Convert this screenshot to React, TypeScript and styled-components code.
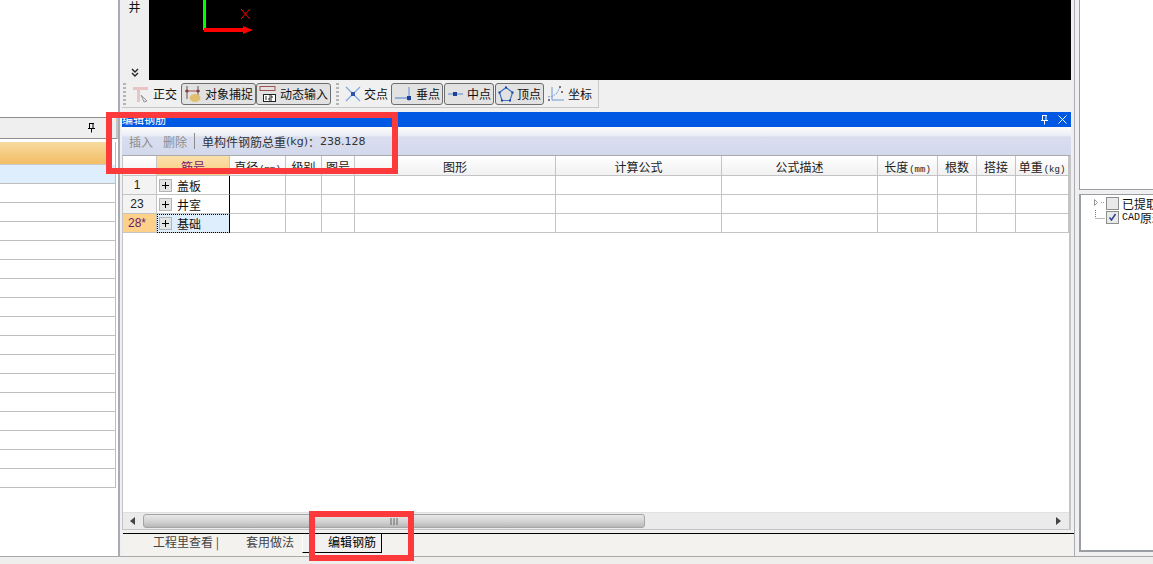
import React from 'react';
import styled, { createGlobalStyle } from 'styled-components';

const GlobalStyle = createGlobalStyle`
  html, body { margin: 0; padding: 0; overflow: hidden; background: #f0f0f0; }
  body { font-family: 'Noto Sans CJK SC', 'Liberation Sans', sans-serif; font-size: 12px; color: #111; }
`;

const Page = styled.div`
  position: relative;
  width: 1153px;
  height: 564px;
  overflow: hidden;
  display: flex;
  flex-direction: column;
`;
const Main = styled.div`
  display: flex;
  height: 556px;
  border-bottom: 1px solid #a9a9a9;
  box-sizing: content-box;
`;
const StatusBar = styled.div`
  flex: 1;
  background: #f0eeec;
`;

/* left list */
const LeftPanel = styled.div`
  width: 118px;
  flex: none;
  background: #fff;
  padding-top: 117px;
  box-sizing: border-box;
`;
const LeftHead = styled.div`
  height: 20px;
  background: #efefef;
  border-top: 1px solid #8e8e8e;
  border-bottom: 1px solid #8e8e8e;
  border-right: 2px solid #c4c4c4;
  display: flex;
  align-items: center;
  justify-content: flex-end;
  padding-right: 20px;
`;
const LeftList = styled.div`
  margin-top: 3px;
  width: 116px;
  border-right: 1px solid #bdbdbd;
  box-sizing: border-box;
`;
const LeftHeadRow = styled.div`
  height: 23px;
  margin-right: 3px;
  background: linear-gradient(#f8dba0, #f2bd64);
  border-bottom: 1px solid #c9c9c9;
  box-sizing: border-box;
`;
const LeftRow = styled.div<{ $active?: boolean }>`
  height: 19px;
  background: ${(p) => (p.$active ? '#deeefc' : '#fff')};
  border-bottom: 1px solid #bfbfbf;
  box-sizing: border-box;
`;

/* centre */
const Center = styled.div`
  width: 957px;
  flex: none;
  box-sizing: border-box;
  border-left: 2px solid #a9adb3;
  display: flex;
  flex-direction: column;
  background: #f0f0f0;
`;
const ViewRow = styled.div`
  display: flex;
  height: 80px;
  flex: none;
`;
const SideStrip = styled.div`
  width: 29px;
  flex: none;
  background: #efefef;
  display: flex;
  flex-direction: column;
  justify-content: space-between;
  align-items: center;
  padding-bottom: 3px;
  box-sizing: border-box;
  line-height: 14px;
  font-size: 12px;
`;
const Canvas = styled.div`
  width: 922px;
  flex: none;
  background: #000;
`;
const SnapBar = styled.div`
  display: flex;
  align-items: center;
  width: 477px;
  height: 28px;
  flex: none;
  margin-left: 2px;
  padding-left: 1px;
  box-sizing: border-box;
  border-right: 1px solid #c8c8c8;
  border-bottom: 1px solid #c8c8c8;
`;
const Grip = styled.span`
  width: 3px;
  height: 22px;
  margin-right: 3px;
  flex: none;
  background: repeating-linear-gradient(#b4b4b4 0 2px, transparent 2px 4px);
`;
const SnapSep = styled(Grip)`
  margin: 0 2px 0 5px;
`;
const SnapButton = styled.div<{ $on?: boolean; $tight?: boolean }>`
  display: flex;
  align-items: center;
  gap: 3px;
  height: 22px;
  margin-left: ${(p) => (p.$tight ? 0 : 1)}px;
  padding: 0 2px 0 2px;
  font-size: 12px;
  white-space: nowrap;
  box-sizing: border-box;
  border-radius: 3px;
  border: 1px solid ${(p) => (p.$on ? '#6d6d6d' : 'transparent')};
  background: ${(p) => (p.$on ? '#e2e2e2' : 'transparent')};
`;

const Dock = styled.div`
  margin-top: 4px;
  margin-left: 2px;
  width: 949px;
  flex: 1;
  display: flex;
  flex-direction: column;
  min-height: 0;
`;
const TitleBar = styled.div`
  height: 15px;
  flex: none;
  background: #0159e3;
  color: #fff;
  font-size: 11px;
  line-height: 15px;
  padding: 0 4px 0 0;
  display: flex;
  justify-content: space-between;
  align-items: center;
`;
const TitleIcons = styled.div`
  display: flex;
  gap: 9px;
  align-items: center;
`;
const EditBar = styled.div`
  height: 28px;
  flex: none;
  display: flex;
  align-items: center;
  padding-left: 7px;
  background: linear-gradient(#fdfdfd 0, #f3f4f8 5px, #e8ebf4 9px, #d9deef 10px, #d3d9ec 100%);
  color: #333;
`;
const EditAction = styled.span`
  color: #8d8d8d;
  margin-right: 10px;
`;
const EditDivider = styled.span`
  width: 1px;
  height: 16px;
  background: #8a8a8a;
  margin: 0 7px 0 -3px;
`;
const Latin = styled.span`
  font-family: 'DejaVu Sans', sans-serif;
  font-size: 11px;
`;
const GridWrap = styled.div`
  height: 375px;
  flex: none;
  background: #fff;
  border-top: 1px solid #a9a9a9;
  border-left: 1px solid #c4c4c4;
  border-right: 2px solid #c4c4c4;
  display: flex;
  flex-direction: column;
  box-sizing: border-box;
  border-bottom: 1px solid #c4c4c4;
`;
const Grid = styled.div`
  flex: 1;
`;
const COLUMNS = '34px 73px 56px 36px 33px 201px 166px 156px 60px 39px 39px 53px';
const GridHead = styled.div`
  display: grid;
  grid-template-columns: ${COLUMNS};
  height: 20px;
`;
const HeadCell = styled.div<{ $active?: boolean }>`
  border-right: 1px solid #c4c4c4;
  border-bottom: 1px solid #c4c4c4;
  background: ${(p) => (p.$active ? 'linear-gradient(#fbe0aa, #f7cd84)' : 'linear-gradient(#fff, #f1f1f1)')};
  color: ${(p) => (p.$active ? '#7a1a6a' : '#222')};
  text-align: center;
  line-height: 22px;
  box-sizing: border-box;
  white-space: nowrap;
  overflow: hidden;
`;
const Unit = styled.span`
  font-family: 'Liberation Mono', monospace;
  font-size: 9px;
  margin-left: 1px;
`;
const DataRow = styled.div`
  display: grid;
  grid-template-columns: ${COLUMNS};
  height: 19px;
`;
const Cell = styled.div`
  border-right: 1px solid #c4c4c4;
  border-bottom: 1px solid #c4c4c4;
  box-sizing: border-box;
`;
const RowHead = styled(Cell)<{ $active?: boolean }>`
  background: ${(p) => (p.$active ? '#fdd18a' : '#f3f3f3')};
  color: ${(p) => (p.$active ? '#6d1a6a' : '#222')};
  text-align: center;
  padding-right: 5px;
  line-height: 18px;
  font-size: 12px;
  font-family: 'Liberation Sans', sans-serif;
`;
const NameCell = styled(Cell)<{ $active?: boolean }>`
  display: flex;
  align-items: center;
  gap: 5px;
  padding-left: 2px;
  border-right: 1px solid #000;
  background: ${(p) => (p.$active ? '#deeefc' : '#fff')};
  outline: ${(p) => (p.$active ? '1px dotted #000' : 'none')};
  outline-offset: -1px;
`;
const Expander = styled.span`
  width: 11px;
  height: 11px;
  flex: none;
  border: 1px solid #b4b4b4;
  background: #e4e4e4;
  position: relative;
  &::before {
    content: '';
    position: absolute;
    left: 2px;
    top: 5px;
    width: 7px;
    height: 1px;
    background: #000;
  }
  &::after {
    content: '';
    position: absolute;
    left: 5px;
    top: 2px;
    width: 1px;
    height: 7px;
    background: #000;
  }
`;
const ScrollBar = styled.div`
  height: 16px;
  flex: none;
  display: flex;
  align-items: center;
  background: #ebebeb;
  border-top: 1px solid #e0e0e0;
  padding: 0 8px 0 7px;
  gap: 8px;
`;
const ScrollThumb = styled.div`
  width: 502px;
  height: 14px;
  flex: none;
  border: 1px solid #a5a5a5;
  border-radius: 3px;
  box-sizing: border-box;
  background: linear-gradient(#e8e8e8, #d2d2d2 55%, #b8b8b8);
  display: flex;
  align-items: center;
  justify-content: center;
`;
const ScrollTrack = styled.div`
  flex: 1;
`;
const Tabs = styled.div`
  margin-top: 3px;
  margin-left: 1px;
  flex: 1;
  display: flex;
  align-items: flex-start;
  background: #f4f2ee;
  border-top: 1px solid #000;
  padding-left: 30px;
  width: 948px;
  font-size: 12px;
  color: #444;
`;
const Tab = styled.div<{ $gap?: number }>`
  height: 18px;
  line-height: 15px;
  margin-left: ${(p) => p.$gap ?? 0}px;
  white-space: nowrap;
`;
const ActiveTab = styled(Tab)`
  width: 53px;
  color: #000;
  background: #f1f1f1;
  border-left: 1px solid #fff;
  border-right: 1px solid #000;
  border-bottom: 1px solid #000;
  padding-left: 25px;
`;

/* right */
const RightPanel = styled.div`
  flex: 1;
  display: flex;
  flex-direction: column;
  border-left: 1px solid #a9adb3;
  margin-left: -1px;
  padding: 0 0 4px 4px;
  background: #f0f0f0;
  gap: 4px;
`;
const RightTop = styled.div`
  height: 190px;
  flex: none;
  background: #fff;
  border-left: 1px solid #9a9ea4;
  border-bottom: 1px solid #9a9ea4;
  box-sizing: border-box;
`;
const TreePanel = styled.div`
  flex: 1;
  background: #fff;
  border-left: 2px solid #9a9ea4;
  border-top: 1px solid #9a9ea4;
  border-bottom: 2px solid #9a9ea4;
  padding: 1px 0 0 12px;
  overflow: hidden;
`;
const TreeRow = styled.div`
  display: flex;
  align-items: center;
  height: 14px;
  white-space: nowrap;
`;
const TreeCheck = styled.span`
  width: 11px;
  height: 11px;
  flex: none;
  margin: 0 3px 0 0;
  border: 1px solid #8d8d8d;
  background: #e9e9e9;
  display: flex;
  align-items: center;
  justify-content: center;
`;
const TreeCad = styled.span`
  font-family: 'Liberation Mono', monospace;
  font-size: 10px;
`;

/* red marks on the screenshot */
const Mark = styled.div<{ $x: number; $y: number; $w: number; $h: number }>`
  position: absolute;
  left: ${(p) => p.$x}px;
  top: ${(p) => p.$y}px;
  width: ${(p) => p.$w}px;
  height: ${(p) => p.$h}px;
  border: 6px solid #fd3a3b;
  box-sizing: border-box;
  pointer-events: none;
`;

const Pin = ({ color = '#fff' }: { color?: string }) => (
  <svg width="9" height="10" viewBox="0 0 9 10">
    <path d="M2 0.5h5M2.5 0.5v5M6 0.5v5M1 5.5h7M4.5 5.5v4" stroke={color} fill="none" strokeWidth="1" />
  </svg>
);

const CanvasArt = () => (
  <svg width="922" height="80" viewBox="0 0 922 80">
    <rect x="54" y="0" width="3" height="30" fill="#00ff00" />
    <rect x="55" y="28" width="40" height="4" fill="#ff0000" />
    <path d="M94 26l10 4-10 4z" fill="#ff0000" />
    <path d="M92 9l9 10M101 9l-9 10" stroke="#ff0000" strokeWidth="1" />
  </svg>
);

const OrthoIcon = () => (
  <svg width="18" height="18" viewBox="0 0 18 18">
    <path d="M1 2h15v3H8v12H5V5H1z" fill="#e8c4c4" />
    <path d="M9 10l6 6-3 1z" fill="#dfe3ea" stroke="#9a9a9a" />
  </svg>
);
const ObjectIcon = () => (
  <svg width="18" height="18" viewBox="0 0 18 18">
    <path d="M3 1v13M14 1v11" stroke="#7a5050" />
    <path d="M1 6h15" stroke="#a05050" strokeWidth="1" />
    <circle cx="3" cy="6" r="1.6" fill="#804040" />
    <circle cx="14" cy="6" r="1.6" fill="#804040" />
    <ellipse cx="11" cy="13" rx="5.5" ry="4" fill="#e0c070" />
  </svg>
);
const InputIcon = () => (
  <svg width="18" height="18" viewBox="0 0 18 18">
    <path d="M1 1.5h15M1 5.5h15" stroke="#a05050" />
    <path d="M1 1v5M16 1v5" stroke="#a05050" />
    <rect x="4.5" y="9.5" width="12" height="7" fill="#fff" stroke="#222" />
    <path d="M7 11v4M10 11h3v2h-3v2h3" stroke="#222" fill="none" />
  </svg>
);
const CrossIcon = () => (
  <svg width="16" height="16" viewBox="0 0 16 16">
    <path d="M1 1l14 14M15 1L1 15" stroke="#79a8e4" strokeWidth="1.2" />
    <rect x="6" y="6" width="4" height="4" fill="#2a55a8" />
  </svg>
);
const PerpIcon = () => (
  <svg width="19" height="16" viewBox="0 0 19 16">
    <path d="M1 12h16" stroke="#5f8fd4" strokeWidth="1.2" />
    <path d="M15 1v14" stroke="#5f8fd4" />
    <rect x="13" y="10" width="4" height="4" fill="#1f3f98" />
  </svg>
);
const MidIcon = () => (
  <svg width="17" height="16" viewBox="0 0 17 16">
    <path d="M1 8h15" stroke="#6f9ad8" strokeWidth="1.2" />
    <rect x="6" y="6" width="4" height="4" fill="#1f3f98" />
  </svg>
);
const VertexIcon = () => (
  <svg width="16" height="16" viewBox="0 0 16 16">
    <path d="M8 1.5l6.5 5-2.5 8H4l-2.5-8z" fill="none" stroke="#3d74c8" strokeWidth="1.2" />
    <rect x="7" y="0.5" width="2" height="2" fill="#1f3f98" />
    <rect x="0.5" y="5.5" width="2" height="2" fill="#1f3f98" />
    <rect x="13.5" y="5.5" width="2" height="2" fill="#1f3f98" />
    <rect x="3" y="13.5" width="2" height="2" fill="#1f3f98" />
    <rect x="11" y="13.5" width="2" height="2" fill="#1f3f98" />
  </svg>
);
const CoordIcon = () => (
  <svg width="18" height="18" viewBox="0 0 18 18">
    <path d="M5 2v13h12" stroke="#6f9ad8" fill="none" />
    <path d="M1 12l5-1 4-3 3-6" stroke="#6f9ad8" fill="none" strokeDasharray="2 1" />
    <path d="M12 1l2 2M14 1l-2 2M1 14l2 2M3 14l-2 2M14 6l2 2M16 6l-2 2" stroke="#777" />
  </svg>
);
const ChevronIcon = () => (
  <svg width="8" height="9" viewBox="0 0 8 9">
    <path d="M1 1l3 3 3-3M1 5l3 3 3-3" stroke="#222" strokeWidth="1.4" fill="none" />
  </svg>
);
const ClosedBranch = () => (
  <svg width="13" height="14" viewBox="0 0 13 14">
    <path d="M1.5 3.5v6l3-3z" fill="#fff" stroke="#999" />
    <path d="M8 6.5h1M10 6.5h1" stroke="#999" />
  </svg>
);
const LeafBranch = () => (
  <svg width="13" height="14" viewBox="0 0 13 14">
    <path d="M2.5 0v1M2.5 2v1M2.5 4v1M2.5 6v1M2.5 8.5h1M4.5 8.5h1M6.5 8.5h1M8.5 8.5h1M10.5 8.5h1" stroke="#777" />
  </svg>
);
const CheckMark = () => (
  <svg width="9" height="9" viewBox="0 0 9 9">
    <path d="M1.5 4.5l2 2.5 4-6" stroke="#2c4390" strokeWidth="1.5" fill="none" />
  </svg>
);

const headers = [
  { label: '' },
  { label: '筋号' },
  { label: '直径', unit: '(mm)' },
  { label: '级别' },
  { label: '图号' },
  { label: '图形' },
  { label: '计算公式' },
  { label: '公式描述' },
  { label: '长度', unit: '(mm)' },
  { label: '根数' },
  { label: '搭接' },
  { label: '单重', unit: '(kg)' },
];
const rows = [
  { no: '1', name: '盖板' },
  { no: '23', name: '井室' },
  { no: '28*', name: '基础', active: true },
];
const blanks = Array.from({ length: 10 }, (_, i) => i);
const leftRows = Array.from({ length: 17 }, (_, i) => i);

function App() {
  return (
    <Page>
      <GlobalStyle />
      <Main>
        <LeftPanel>
          <LeftHead>
            <Pin color="#000" />
          </LeftHead>
          <LeftList>
            <LeftHeadRow />
            {leftRows.map((i) => (
              <LeftRow key={i} $active={i === 0} />
            ))}
          </LeftList>
        </LeftPanel>
        <Center>
          <ViewRow>
            <SideStrip>
              <span>井</span>
              <ChevronIcon />
            </SideStrip>
            <Canvas>
              <CanvasArt />
            </Canvas>
          </ViewRow>
          <SnapBar>
            <Grip />
            <SnapButton $tight><OrthoIcon />正交</SnapButton>
            <SnapButton $on><ObjectIcon />对象捕捉</SnapButton>
            <SnapButton $on $tight><InputIcon />动态输入</SnapButton>
            <SnapSep />
            <SnapButton><CrossIcon />交点</SnapButton>
            <SnapButton $on $tight><PerpIcon />垂点</SnapButton>
            <SnapButton $on><MidIcon />中点</SnapButton>
            <SnapButton $on><VertexIcon />顶点</SnapButton>
            <SnapButton $tight><CoordIcon />坐标</SnapButton>
          </SnapBar>
          <Dock>
            <TitleBar>
              <span>编辑钢筋</span>
              <TitleIcons>
                <Pin />
                <svg width="9" height="9" viewBox="0 0 9 9">
                  <path d="M0.5 0.5l8 8M8.5 0.5l-8 8" stroke="#fff" fill="none" />
                </svg>
              </TitleIcons>
            </TitleBar>
            <EditBar>
              <EditAction>插入</EditAction>
              <EditAction>删除</EditAction>
              <EditDivider />
              单构件钢筋总重<Latin>(kg)</Latin>：<Latin>238.128</Latin>
            </EditBar>
            <GridWrap>
              <Grid>
                <GridHead>
                  {headers.map((h, i) => (
                    <HeadCell key={i} $active={i === 1}>
                      {h.label}
                      {h.unit && <Unit>{h.unit}</Unit>}
                    </HeadCell>
                  ))}
                </GridHead>
                {rows.map((r) => (
                  <DataRow key={r.no}>
                    <RowHead $active={r.active}>{r.no}</RowHead>
                    <NameCell $active={r.active}>
                      <Expander />
                      {r.name}
                    </NameCell>
                    {blanks.map((b) => (
                      <Cell key={b} />
                    ))}
                  </DataRow>
                ))}
              </Grid>
              <ScrollBar>
                <svg width="5" height="8" viewBox="0 0 5 8"><path d="M5 0v8L0 4z" fill="#444" /></svg>
                <ScrollThumb>
                  <svg width="9" height="7" viewBox="0 0 9 7">
                    <path d="M1 0v7M4 0v7M7 0v7" stroke="#777" strokeWidth="1.2" />
                  </svg>
                </ScrollThumb>
                <ScrollTrack />
                <svg width="5" height="8" viewBox="0 0 5 8"><path d="M0 0v8l5-4z" fill="#444" /></svg>
              </ScrollBar>
            </GridWrap>
            <Tabs>
              <Tab>工程里查看 |</Tab>
              <Tab $gap={27}>套用做法</Tab>
              <ActiveTab $gap={8}>编辑钢筋</ActiveTab>
            </Tabs>
          </Dock>
        </Center>
        <RightPanel>
          <RightTop />
          <TreePanel>
            <TreeRow><ClosedBranch /><TreeCheck />已提取</TreeRow>
            <TreeRow><LeafBranch /><TreeCheck><CheckMark /></TreeCheck><TreeCad>CAD</TreeCad>原理</TreeRow>
          </TreePanel>
        </RightPanel>
      </Main>
      <StatusBar />
      <Mark $x={106} $y={112} $w={292} $h={62} />
      <Mark $x={309} $y={511} $w={105} $h={50} />
    </Page>
  );
}

export default App;
